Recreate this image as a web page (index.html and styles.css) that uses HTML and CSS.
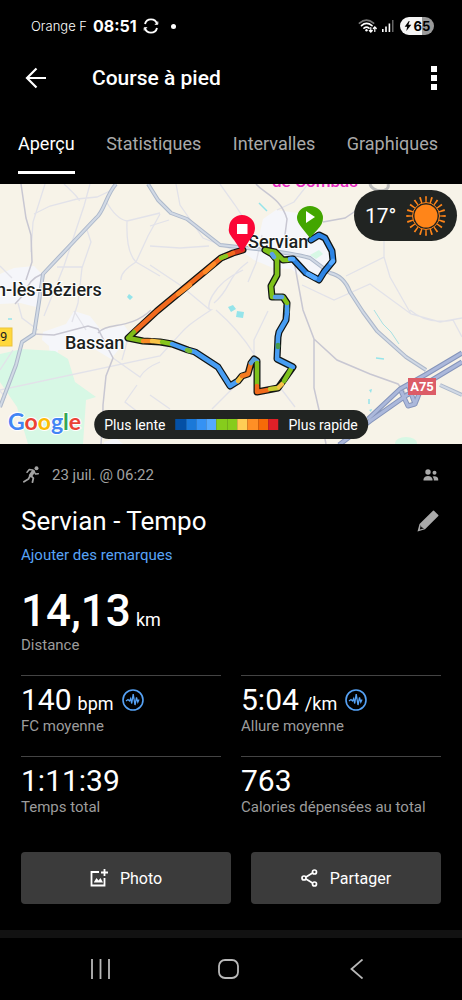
FILE: index.html
```html
<!DOCTYPE html>
<html lang="fr">
<head>
<meta charset="utf-8">
<meta name="viewport" content="width=device-width, initial-scale=1">
<title>Course à pied</title>
<link rel="stylesheet" href="styles.css">
</head>
<body>
<div class="screen">
  <div class="status">
    <span class="carrier">Orange F</span>
    <span class="clock">08:51</span>
    <svg class="sync" width="16" height="16" viewBox="0 0 16 16" fill="none" stroke="#fff" stroke-width="1.900"><path d="M2 6A6.200 6.200 0 0 1 14 6M14 10A6.200 6.200 0 0 1 2 10"/><path d="M14.800 3.500v2.800h-3M1.200 12.500V9.700h3" stroke-width="1"/></svg>
    <span class="dot"></span>
    <span class="signals">
      <svg width="20" height="16" viewBox="0 0 20 16" fill="none" stroke-linecap="round"><path d="M1.500 5.200Q8.500-1 15.500 5.200" stroke="#777" stroke-width="1.800"/><path d="M3.500 7.600Q8.500 3.200 14 7.600M6 10.200Q8.500 8 11 10.200" stroke="#fff" stroke-width="1.700"/><circle cx="8.500" cy="12.300" r="1.200" fill="#fff"/><path d="M12.800 9.500v4.500m-1.500-1.500 1.500 1.700 1.500-1.700M16.800 13.500V9m-1.500 1.500 1.500-1.700 1.500 1.700" stroke="#fff" stroke-width="1.200"/></svg>
      <svg width="13" height="14" viewBox="0 0 13 14"><path d="M1 10h1.600v3H1zM4.200 7.500h1.600V13H4.200zM7.600 4.500h1.600V13H7.600z" fill="#fff"/><path d="M11 1h1.500v12H11z" fill="#666"/></svg>
      <span class="battery"><svg width="8" height="10" viewBox="0 0 8 12"><path d="M5 0 0 7h3L2 12 8 4.500H4.500L6 0z" fill="#000"/></svg>65</span>
    </span>
  </div>

  <header class="header">
    <button class="icon-button" aria-label="Retour"><svg width="22" height="22" viewBox="0 0 22 22" fill="none" stroke="#fff" stroke-width="2.200"><path d="M21 11H2.500M11.500 1.500 2 11l9.500 9.500"/></svg></button>
    <h1 class="header-title">Course à pied</h1>
    <button class="icon-button" aria-label="Plus d'options"><svg width="6" height="24" viewBox="0 0 6 24" fill="#fff"><path d="M0 0h6v6H0zM0 9h6v6H0zM0 18h6v6H0z"/></svg></button>
  </header>

  <nav class="tabs">
    <a class="tab tab-active" href="#apercu">Aperçu</a>
    <a class="tab" href="#statistiques">Statistiques</a>
    <a class="tab" href="#intervalles">Intervalles</a>
    <a class="tab" href="#graphiques">Graphiques</a>
  </nav>

  <section class="map" id="apercu">
    <svg class="map-canvas" viewBox="0 184 462 260" preserveAspectRatio="xMidYMid slice" role="img" aria-label="Parcours">
      <rect y="184" width="462" height="260" fill="#f7f3e8"/>
      <g fill="#f5f6fa">
        <path d="M0 274 14 268 34 266 43 275 40 297 36 307 20 303 0 304Z"/>
        <path d="M43 332 66 324 74 311 90 316 101 330 124 325 132 336 120 348 111 359 96 350 58 350 57 358 50 359 49 346 42 340Z"/>
        <path d="M263 219 276 210 298 213 314 222 336 250 330 263 319 279 306 280 291 269 273 268 254 260 240 250 258 241Z"/>
        <path d="M104 442 116 438 123 444H104Z"/>
      </g>
      <g fill="#d7f8e5">
        <path d="M0 354 22 349 55 351 68 359 75 382 96 397 86 400 83 444H28L17 407 0 382Z"/>
        <path d="M310 255 319 250 323 254 316 259Z"/><ellipse cx="406" cy="443" rx="11" ry="6"/>
      </g>
      <g fill="#95e4ea">
        <path d="M129 294 133 297 130 300 127 297ZM228 307l5-2 3 4-5 3zM237 311l7 1-1 6-7-1zM369 390l3-1-1 4zM369 410l3-1-1 3z"/>
        <path d="m259 203 8 8m102 188v5m7-46 8 1M8 319h4" stroke="#95e4ea" stroke-width="1.500"/>
      </g>
      <g fill="none" stroke="#e2e2e9" stroke-width="1.300">
        <path d="M45 184 33 222 31 252M64 184Q78 197 79 200L77 199 50 206 34 214M77 199 97 197 112 190M90 184 84 206 64 266 44 316M106 201Q116 219 127 221L160 213M127 221C126 247 131 257 136 262L160 276M136 262Q120 272 121 280M160 214 148 236 136 262M87 230 91 242 82 268 78 303 72 322M57 267H82M18 303 22 318 38 330M0 266 12 278"/>
        <path d="M150 226 169 220M150 246 180 248 209 246M176 184 180 205 203 238 236 251M220 184 235 205 258 240M308 184 294 202 277 210M262 235 256 263 248 282M243 270C210 285 205 310 211 310 180 330 185 330 170 345L160 356 0 390M150 265 180 285 210 310M248 262C224 280 233 287 214 303M216 310Q239 330 254 354V340L268 311M238 383 212 409M279 386 295 407M384 241V257L346 276M384 257 390 277 411 314M302 285 334 300 370 284 411 314 440 322 462 318M410 310Q427 325 453 320L462 337M113 358 140 377Q145 368 160 362M137 385 125 402 143 416M150 395 170 409M129 335 122 360M74 311 86 330M0 391 6 398M13 350 0 370"/>
      </g>
      <g fill="none" stroke="#c8c7d2" stroke-width="1.500">
        <path d="M21 184 26 218 31 235 32 262 26 280M42 274Q28 280 26 292L15 304M36 293 20 285"/>
        <path d="M256 184C265 194 281 198 287 219L285 235 299 248M323 222 345 218 360 208M294 261 303 310 314 339V388L319 410 326 444M314 339 337 360 370 374 398 384 408 396M101 444Q103 420 103 405L106 376 113 358 98 329 88 326 54 335 33 334M98 333C107 322 130 330 151 310"/>
        <path d="M370 184C372 193 391 193 388 184" stroke="#bbb" stroke-width="3"/>
      </g>
      <g fill="none" stroke-linejoin="round">
        <path d="M116 184C106 195 104 212 96 218L43 274 39 302 34 334 22 342 16 365 0 407M148 184 158 200 171 213 187 219 220 245 238 247M238 247C266 250 294 253 310 258L330 273Q344 276 350 292L363 312 377 331 406 357 426 370M440 385 462 395" stroke="#adb8ca" stroke-width="4"/>
        <path d="M116 184C106 195 104 212 96 218L43 274 39 302 34 334 22 342 16 365 0 407M148 184 158 200 171 213 187 219 220 245 238 247M238 247C266 250 294 253 310 258L330 273Q344 276 350 292L363 312 377 331 406 357 426 370M440 385 462 395" stroke="#d1d9e5" stroke-width="2"/>
        <path d="M462 353 425 375 400 389 368 419M462 362 427 383 407 395 370 421 339 445M408 385 415 404 408 406 401 391M415 404 423 384" stroke="#8594ba" stroke-width="5"/>
        <path d="M462 353 425 375 400 389 368 419M462 362 427 383 407 395 370 421 339 445M408 385 415 404 408 406 401 391M415 404 423 384" stroke="#abb8db" stroke-width="3"/>
        <path d="M374 310 383 324 391 332 399 344" stroke="#a9e1e3" stroke-width="1"/>
      </g>
      <g class="place">
        <text x="-4" y="296">n-lès-Béziers</text>
        <text x="65" y="349">Bassan</text>
        <text x="248" y="248">Servian</text>
      </g>
      <text class="poi" x="272" y="187">de Combas</text>
      <rect x="-6" y="328" width="18" height="18" fill="#ffd83b" stroke="#ecc33a"/>
      <text class="road-number" x="0" y="341">9</text>
      <rect x="408" y="378" width="28" height="17" fill="#dc5c67"/>
      <text class="motorway" x="422" y="391">A75</text>

      <g fill="none" stroke-linejoin="round" stroke-linecap="round">
        <path d="M243 250 233 253 221 258 157 311 128 338 143 341 160 342 172 344 188 350 195 352 218 367 230 386 238 381 242 376 248 374 251 363 254 359 257 361 257 392 278 388 293 367 277 359 278 337 279 332 286 320 287 303 283 297 272 297 271 286 277 275V260L272 254 265 250 275 252 283 260 293 259 306 273 319 280 324 272 333 261 332 251 325 238 319 235 311 240" stroke="#101413" stroke-width="7"/>
        <g stroke-width="4.500">
          <path d="M243 250 233 253" stroke="#d73a1c"/><path d="M233 253 221 258 157 311 135 331" stroke="#f26a1e"/><path d="M214 264 205 272M190 285 178 294" stroke="#ff8b29"/><path d="M226 256 221 258" stroke="#8cc820"/>
          <path d="M134 332 128 338 143 341" stroke="#7fbd19"/><path d="M143 341 152 341" stroke="#f98b26"/><path d="M152 341 161 342" stroke="#f8c347"/><path d="M162 342 172 344" stroke="#86c51c"/>
          <path d="M172 344 188 350 195 352 218 367 230 386 238 381" stroke="#479df3"/><path d="M187 350 190 351" stroke="#78bc37"/><path d="M238 381 242 376" stroke="#f6bd3c"/><path d="M242 376 248 374 251 363" stroke="#f57a20"/><path d="M251 363 254 359 257 361" stroke="#5aa1dd"/>
          <path d="M257 363V385" stroke="#7fc21c"/><path d="M257 386V392L268 390" stroke="#f26b1c"/><path d="M270 389 278 388" stroke="#c8cb2f"/><path d="M279 387 282 384" stroke="#f8c347"/><path d="M284 381 291 369" stroke="#7fc21c"/><path d="M293 367 277 359 278 337 279 332 286 320 287 312" stroke="#479df3"/><path d="M278 347V345" stroke="#489b4d"/>
          <path d="M287 312V308" stroke="#7fc21c"/><path d="M287 304 287 313" stroke="#479df3"/><path d="M287 303 283 297 272 297 271 286 277 275V260L272 254 265 250 275 252 283 260 288 260" stroke="#7fc21c"/><path d="M275 297 282 297M274 257 272 254" stroke="#5aa1e7"/>
          <path d="M290 259 293 259 306 273 319 280 324 272 333 261 332 251 325 238 319 235 311 240" stroke="#2d84e3"/>
          <path d="M290 259 293 259M308 274 315 278M331 263 333 261" stroke="#53a8ff"/>
        </g>
      </g>
      <g transform="translate(242 249)"><path d="M0 0-8-12C-12-17-14-20-13-24A13 13 0 1 1 13-24C13-19 10-15 7-11Z" transform="translate(0 3)" fill="#fb0636"/><path d="M-5-25H5.500V-15H-5Z" fill="#fff"/></g>
      <g transform="translate(310 236)"><path d="M0 0-8-10C-11-14-13-17-13-20A13 12 0 1 1 13-20C13-16 11-12 8-9Z" transform="translate(0 2)" fill="#43a600"/><path d="M-4-25 5-19-4-13Z" fill="#fff"/></g>
      <text class="google" x="8" y="430"><tspan fill="#4285f4">G</tspan><tspan fill="#ea4335">o</tspan><tspan fill="#fbbc05">o</tspan><tspan fill="#4285f4">g</tspan><tspan fill="#34a853">l</tspan><tspan fill="#ea4335">e</tspan></text>
    </svg>
    <div class="weather">
      <span>17°</span>
      <svg width="42" height="42" viewBox="0 0 42 42" fill="none"><circle cx="21" cy="21" r="11.500" fill="#ff8519"/><circle cx="21" cy="21" r="13.500" stroke="#ff8519"/><circle cx="21" cy="21" r="16.700" stroke="#ff8519" stroke-width="6" pathLength="200" stroke-dasharray="3 7" stroke-dashoffset="1.500"/></svg>
    </div>
    <div class="legend">
      <span>Plus lente</span>
      <span class="scale"><i class="s1"></i><i class="s2"></i><i class="s3"></i><i class="s4"></i><i class="s5"></i><i class="s5"></i><i class="s6"></i><i class="s7"></i><i class="s8"></i><i class="s9"></i></span>
      <span>Plus rapide</span>
    </div>
  </section>

  <main class="details">
    <div class="meta">
      <svg width="18" height="18" viewBox="0 0 20 20" fill="none" stroke="#a2a2a2" stroke-linecap="round" stroke-linejoin="round"><circle cx="15" cy="2.500" r="2.200" fill="#a2a2a2" stroke="none"/><path d="M11.500 6 8.500 10.500" stroke-width="4"/><path d="M10.500 4.500 7 4 4.500 7M12.500 6.500 14 9l3-.5" stroke-width="1.700"/><path d="m9 11 2.500 2.500-1 4.500M7.500 11.500 6 14.500 1 17.500" stroke-width="2"/></svg>
      <time>23 juil. @ 06:22</time>
      <svg class="people" width="16" height="12" viewBox="0 0 16 12" fill="#a9a9a9"><circle cx="5" cy="3" r="2.700"/><circle cx="11.500" cy="3.800" r="2"/><path d="M.5 11.500V10Q1.500 7 5 7t4.500 3v1.500zM10.800 11.500V10Q10.500 8.500 9.500 7.500 14.500 6.500 15.200 10v1.500z"/></svg>
    </div>
    <div class="title-row">
      <h2 class="title">Servian - Tempo</h2>
      <button class="icon-button" aria-label="Modifier"><svg width="22" height="22" viewBox="0 0 22 22"><path d="M.5 21.500 2.500 14 16 .8Q16.500.3 17 .8L21.300 5Q21.800 5.500 21.300 6L8 19.200Z" fill="#aaa"/><path d="m3.800 15 .5 2 2.700 1.500-4.200 1z" fill="#111"/></svg></button>
    </div>
    <a class="note" href="#remarques">Ajouter des remarques</a>

    <div class="distance"><strong>14,13</strong><span class="unit">km</span></div>
    <div class="label">Distance</div>

    <div class="stats">
      <div class="stat">
        <div class="value">140 <span class="unit">bpm</span> <svg class="pulse" width="22" height="22" viewBox="0 0 22 22" fill="none" stroke="#56a2f5"><circle cx="11" cy="11" r="10" stroke-width="1.600"/><path d="M4 12 6 10.500 7.500 12 8.700 9.500 9.700 14.500 11.200 5 13 16 14.500 8.500 15.800 13.200 17 10.500" stroke-width="1.300"/></svg></div>
        <div class="label">FC moyenne</div>
      </div>
      <div class="stat">
        <div class="value">5:04 <span class="unit">/km</span> <svg class="pulse" width="22" height="22" viewBox="0 0 22 22" fill="none" stroke="#56a2f5"><circle cx="11" cy="11" r="10" stroke-width="1.600"/><path d="M4 12 6 10.500 7.500 12 8.700 9.500 9.700 14.500 11.200 5 13 16 14.500 8.500 15.800 13.200 17 10.500" stroke-width="1.300"/></svg></div>
        <div class="label">Allure moyenne</div>
      </div>
      <div class="stat">
        <div class="value">1:11:39</div>
        <div class="label">Temps total</div>
      </div>
      <div class="stat">
        <div class="value">763</div>
        <div class="label">Calories dépensées au total</div>
      </div>
    </div>

    <div class="actions">
      <button class="action action-photo"><svg width="18" height="18" viewBox="0 0 18 18" fill="none" stroke="#fff" stroke-width="1.800"><path d="M9 3H1.500v13.500h13V9M14.500 0v7M11 3.500h7"/><path d="m4 13 2.500-4 2 2.500L10.500 9l2.500 4.500H4z" fill="#fff" stroke="none"/></svg>Photo</button>
      <button class="action action-share"><svg width="17" height="18" viewBox="0 0 17 18" fill="none" stroke="#fff" stroke-width="1.700"><circle cx="3" cy="9" r="2"/><circle cx="13.500" cy="3" r="2"/><circle cx="13.500" cy="15" r="2"/><path d="m5 8 6.500-4M5 10l6.500 4"/></svg>Partager</button>
    </div>
  </main>

  <div class="band"></div>
  <footer class="system-nav">
    <button class="nav-button" aria-label="Applications récentes"><svg width="20" height="20" viewBox="0 0 20 20" stroke="#b8b8b8" stroke-width="1.800"><path d="M1 0v20M9.500 0v20M18 0v20"/></svg></button>
    <button class="nav-button" aria-label="Accueil"><svg width="21" height="20" viewBox="0 0 21 20" fill="none" stroke="#b8b8b8" stroke-width="1.800"><rect x="1" y="1" width="19" height="18" rx="6"/></svg></button>
    <button class="nav-button" aria-label="Précédent"><svg width="13" height="20" viewBox="0 0 13 20" fill="none" stroke="#b8b8b8" stroke-width="1.800"><path d="M12.500.5 1.500 10l11 9.500"/></svg></button>
  </footer>
</div>
</body>
</html>
```

FILE: styles.css
```css
* { box-sizing: border-box; }
body {
  margin: 0;
  background: #000;
  color: #fff;
  font-family: Roboto, "Liberation Sans", sans-serif;
  font-size: 15px;
}
svg { display: block; flex: none; }
h1, h2 { margin: 0; font-weight: 400; }
button {
  padding: 0;
  border: 0;
  background: none;
  color: inherit;
  font: inherit;
}
a { color: inherit; text-decoration: none; }
.screen { background: #000; }

.status {
  display: flex;
  align-items: center;
  height: 52px;
  padding: 0 28px 0 31px;
  font-family: Inter, Roboto, sans-serif;
}
.carrier { font-size: 13px; font-weight: 300; }
.clock { margin-left: 6px; font-size: 16px; font-weight: 700; }
.sync { margin-left: 6px; }
.dot { width: 5px; height: 5px; margin-left: 12px; border-radius: 50%; background: #fff; }
.signals { display: flex; align-items: center; gap: 3px; margin-left: auto; }
.battery {
  display: flex;
  align-items: center;
  justify-content: center;
  gap: 2px;
  width: 34px;
  height: 18px;
  margin-left: 3px;
  border-radius: 9px;
  background: linear-gradient(90deg, #f5f5f5 64%, #999 64%);
  color: #000;
  font-size: 13px;
  font-weight: 700;
}

.header {
  display: flex;
  align-items: center;
  height: 51px;
  padding: 0 25px;
}
.header-title { flex: 1; margin-left: 45px; font-size: 21px; line-height: 24px; font-weight: 500; }

.tabs {
  display: flex;
  justify-content: space-between;
  height: 81px;
  padding: 30px 24px 10px 18px;
  font-size: 18px;
  line-height: 22px;
}
.tab { color: #a9a9a9; }
.tab-active { border-bottom: 3px solid #fff; color: #fff; }

.map { position: relative; height: 260px; overflow: hidden; }
.map-canvas { width: 100%; height: 100%; }
.place text {
  font-size: 18px;
  font-weight: 500;
  fill: #1c1f21;
  stroke: #fff;
  stroke-width: 2px;
  paint-order: stroke;
}
.poi { font-size: 17px; font-weight: 500; fill: #e82cc4; }
.road-number { font-size: 13px; fill: #222; }
.motorway { font-size: 13px; font-weight: 700; fill: #fff; text-anchor: middle; }
.google {
  font-family: Lato, sans-serif;
  font-size: 23px;
  font-weight: 700;
  stroke: #fff;
  stroke-width: 2px;
  paint-order: stroke;
}
.weather {
  position: absolute;
  top: 6px;
  right: 5px;
  display: flex;
  align-items: center;
  justify-content: space-between;
  width: 103px;
  height: 51px;
  padding: 0 10px 0 11px;
  border-radius: 26px;
  background: #212422;
  font-size: 21px;
}
.legend {
  position: absolute;
  bottom: 5px;
  left: 50%;
  display: flex;
  align-items: center;
  gap: 10px;
  height: 29px;
  padding: 0 10px;
  border-radius: 15px;
  background: #212422;
  font-size: 14px;
  white-space: nowrap;
  transform: translateX(-50%);
}
.scale { display: flex; width: 103px; height: 11px; }
.scale i { flex: 1; }
.s1 { background: #0450a5; }
.s2 { background: #1a78d8; }
.s3 { background: #3592f4; }
.s4 { background: #54a9ff; }
.s5 { background: #86cc1c; }
.s6 { background: #ffcd55; }
.s7 { background: #ff8f25; }
.s8 { background: #f66a08; }
.s9 { background: #df2027; }

.details { padding: 18px 21px 26px; }
.meta { display: flex; align-items: center; height: 26px; padding-left: 2px; color: #a2a2a2; }
.meta time { margin-left: 11px; }
.people { margin: 0 2px 0 auto; }
.title-row {
  display: flex;
  align-items: center;
  justify-content: space-between;
  margin-top: 17px;
  padding-right: 2px;
}
.title { font-size: 26px; line-height: 32px; }
.note { display: block; width: fit-content; margin-top: 8px; color: #58a4f7; line-height: 20px; }
.distance {
  display: flex;
  align-items: baseline;
  gap: 5px;
  margin-top: 24px;
  font-size: 44px;
  line-height: 44px;
}
.distance strong { font-weight: 500; }
.unit { font-size: 18px; line-height: 20px; }
.label { color: #9c9c9c; line-height: 20px; }
.distance + .label { margin-top: 2px; }
.stats { display: grid; grid-template-columns: 1fr 1fr; column-gap: 20px; margin-top: 20px; }
.stat { padding: 8px 0 20px; border-top: 1px solid #444; }
.value { display: flex; align-items: baseline; gap: 6px; font-size: 30px; line-height: 32px; }
.pulse { align-self: center; margin-left: 2px; }
.actions { display: flex; gap: 20px; margin-top: 15px; }
.action {
  display: flex;
  align-items: center;
  justify-content: center;
  gap: 12px;
  height: 52px;
  border-radius: 4px;
  background: #3b3b3b;
  font-size: 16px;
}
.action-photo { flex: 21 1 0; }
.action-share { flex: 19 1 0; }

.band { height: 8px; background: #121212; }
.system-nav {
  display: flex;
  align-items: center;
  justify-content: center;
  height: 62px;
  padding-right: 5px;
}
.nav-button { display: flex; justify-content: center; width: 28%; }
```
